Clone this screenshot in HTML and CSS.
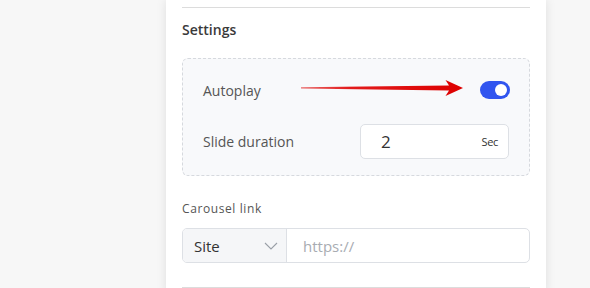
FILE: index.html
```html
<!DOCTYPE html>
<html lang="en">
<head>
    <meta charset="UTF-8">
    <title>Carousel settings</title>
    <link rel="stylesheet" href="styles.css">
</head>
<body>
<div class="panel">
    <hr class="divider">
    <h3 class="section-title">Settings</h3>
    <div class="settings-box">
        <div class="row">
            <span class="label">Autoplay</span>
            <span class="toggle on"><span class="knob"></span></span>
        </div>
        <div class="row">
            <span class="label">Slide duration</span>
            <div class="duration">
                <span class="value">2</span>
                <span class="unit">Sec</span>
            </div>
        </div>
    </div>
    <div class="field-label">Carousel link</div>
    <div class="link-group">
        <div class="select">
            <span>Site</span>
            <svg class="chevron" width="14" height="8" viewBox="0 0 14 8">
                <path d="M1 1 L7 7 L13 1" fill="none" stroke="#9aa0a8" stroke-width="1.1"/>
            </svg>
        </div>
        <div class="url">https://</div>
    </div>
    <hr class="divider bottom">
</div>

<!-- annotation arrow -->
<svg class="arrow" width="170" height="24" viewBox="298 78 170 24">
    <defs>
        <linearGradient id="red" x1="0" x2="1" y1="0" y2="0">
            <stop offset="0" stop-color="#e96a6a"/>
            <stop offset="0.3" stop-color="#e21b1b"/>
            <stop offset="1" stop-color="#dd0000"/>
        </linearGradient>
    </defs>
    <polygon points="301,87.2 449,85.6 445.5,80 463,88 445.5,96 449,90.6 301,88.6" fill="url(#red)"/>
</svg>
</body>
</html>
```

FILE: styles.css
```css
body {
    margin: 0;
    background: #f7f7f7;
    font-family: 'Open Sans', 'Noto Sans', sans-serif;
    color: #333;
    width: 590px;
    height: 288px;
    overflow: hidden;
}

.panel {
    margin-left: 166px;
    width: 348px;
    height: 288px;
    padding: 7px 16px 0;
    background: #fff;
    box-shadow: 0 0 10px rgba(0, 0, 0, 0.1);
    overflow: hidden;
}

.divider {
    margin: 0;
    border: none;
    border-top: 1px solid #dcdcdc;
}

.divider.bottom {
    margin-top: 24px;
}

.section-title {
    margin: 12px 0 18px;
    font-size: 14px;
    line-height: 20px;
    font-weight: 600;
    color: #3a3a3a;
}

.settings-box {
    border: 1px dashed #d6d9de;
    border-radius: 6px;
    background: #f8f9fb;
    padding: 14px 20px 16px;
    display: flex;
    flex-direction: column;
    gap: 17px;
}

.row {
    display: flex;
    align-items: center;
    justify-content: space-between;
    min-height: 34px;
}

.label {
    font-size: 14px;
    color: #555;
}

.toggle {
    width: 30px;
    height: 18px;
    border-radius: 9px;
    background: #ccc;
    display: flex;
    align-items: center;
    justify-content: flex-end;
    padding: 0 3px;
    box-sizing: border-box;
    margin-right: -1px;
}

.toggle.on {
    background: #3155ef;
}

.knob {
    width: 12px;
    height: 12px;
    border-radius: 50%;
    background: #fff;
}

.duration {
    width: 149px;
    height: 35px;
    box-sizing: border-box;
    border: 1px solid #dde0e5;
    border-radius: 5px;
    background: #fff;
    display: flex;
    align-items: center;
    justify-content: space-between;
    padding: 0 10px 0 20px;
}

.duration .value {
    font-size: 17px;
    color: #333;
}

.duration .unit {
    font-size: 11px;
    color: #333;
    letter-spacing: -0.3px;
}

.field-label {
    margin: 25px 0 11px;
    font-size: 12px;
    line-height: 16px;
    letter-spacing: 0.6px;
    color: #555;
}

.link-group {
    display: flex;
    height: 35px;
    box-sizing: border-box;
    border: 1px solid #dde0e5;
    border-radius: 5px;
    overflow: hidden;
}

.select {
    width: 104px;
    box-sizing: border-box;
    background: #f5f6f8;
    border-right: 1px solid #dde0e5;
    display: flex;
    align-items: center;
    justify-content: space-between;
    padding: 0 8px 0 11px;
    font-size: 15px;
    color: #333;
}

.url {
    display: flex;
    align-items: center;
    padding-left: 16px;
    font-size: 15px;
    color: #a8acb2;
}

.arrow {
    position: absolute;
    left: 298px;
    top: 78px;
}
```
